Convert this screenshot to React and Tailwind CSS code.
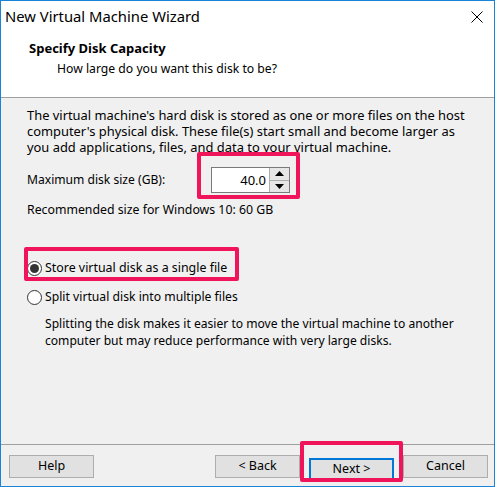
import React from "react";

const font = { fontFamily: '"Noto Sans", "Open Sans", sans-serif' };

function Radio({ checked }) {
  return (
    <span className="w-[15px] h-[15px] rounded-full border border-[#333333] bg-white flex items-center justify-center shrink-0">
      {checked && <span className="w-[9px] h-[9px] rounded-full bg-[#333333]" />}
    </span>
  );
}

function Spinner() {
  return (
    <div className="flex h-[26px] w-[79px] border border-[#7a7a7a] bg-white">
      <div className="flex-1 text-right pr-[3px] leading-[24px] text-[13px]">40.0</div>
      <div className="w-[20px] flex flex-col border-l border-[#adadad]">
        <div className="flex-1 bg-[#e6e6e6] border-b border-[#adadad] flex items-center justify-center">
          <svg width="9" height="5" viewBox="0 0 9 5"><path d="M4.5 0 L9 5 L0 5 Z" fill="#000" /></svg>
        </div>
        <div className="flex-1 bg-[#e6e6e6] flex items-center justify-center">
          <svg width="9" height="5" viewBox="0 0 9 5"><path d="M0 0 L9 0 L4.5 5 Z" fill="#000" /></svg>
        </div>
      </div>
    </div>
  );
}

function Btn({ children, focus }) {
  return (
    <button
      className={`w-[85px] h-[23px] bg-[#e1e1e1] text-[12.5px] text-black leading-none ${
        focus ? "border-2 border-[#0078d7]" : "border border-[#adadad]"
      }`}
    >
      {children}
    </button>
  );
}

export default function App() {
  return (
    <div className="w-[499px] h-[487px] bg-white text-black" style={font}>
      <div className="w-[495px] h-[487px] border border-[#1883d7] bg-[#f0f0f0] flex flex-col">
        {/* Header */}
        <div className="h-[97px] bg-white border-b border-[#a0a0a0] flex flex-col">
          <div className="h-[31px] flex items-center justify-between pl-[4px] pr-[11px]">
            <span className="text-[14.8px]">New Virtual Machine Wizard</span>
            <svg width="12" height="12" viewBox="0 0 12 12">
              <path d="M0.5 0.5 L11.5 11.5 M11.5 0.5 L0.5 11.5" stroke="#000" strokeWidth="1" />
            </svg>
          </div>
          <div className="pl-[28px] pt-[8px] text-[13px] leading-[16px] font-bold">Specify Disk Capacity</div>
          <div className="pl-[56px] pt-[5px] text-[12.2px] leading-[16px]">How large do you want this disk to be?</div>
        </div>

        {/* Body */}
        <div className="flex-1 pl-[26px] pt-[9px] text-[12.2px] leading-[16px]">
          <p className="text-[12.9px]">
            The virtual machine's hard disk is stored as one or more files on the host
            <br />
            computer's physical disk. These file(s) start small and become larger as
            <br />
            you add applications, files, and data to your virtual machine.
          </p>
          <div className="mt-[12px] flex items-center h-[26px]">
            <span className="w-[184px] text-[12.1px]">Maximum disk size (GB):</span>
            <div className="relative">
              <Spinner />
              <div className="absolute left-[-14px] top-[-15px] w-[103px] h-[47px] border-4 border-[#f0145a] rounded-[2px]" />
            </div>
          </div>
          <p className="mt-[9px] text-[12.3px]">Recommended size for Windows 10: 60 GB</p>

          <div className="mt-[42px] relative flex items-center gap-[3px] h-[16px]">
            <Radio checked />
            <span className="text-[12.4px]">Store virtual disk as a single file</span>
            <div className="absolute left-[-3px] top-[-13px] w-[215px] h-[34px] border-4 border-[#f0145a] rounded-[2px]" />
          </div>
          <div className="mt-[13px] flex items-center gap-[3px] h-[16px]">
            <Radio />
            <span>Split virtual disk into multiple files</span>
          </div>
          <p className="mt-[10px] pl-[18px] leading-[17px] text-[12.1px]">
            Splitting the disk makes it easier to move the virtual machine to another
            <br />
            computer but may reduce performance with very large disks.
          </p>
        </div>

        {/* Footer */}
        <div className="h-[42px] border-t border-[#a0a0a0] flex items-start pt-[10px] pl-[8px] pr-[6px]">
          <Btn>Help</Btn>
          <div className="flex-1" />
          <div className="flex gap-[9px]">
            <Btn>&lt; Back</Btn>
            <div className="relative">
              <Btn focus>Next &gt;</Btn>
              <div className="absolute left-[-9px] top-[-14px] w-[103px] h-[41px] border-4 border-[#f0145a] rounded-[2px]" />
            </div>
            <Btn>Cancel</Btn>
          </div>
        </div>
      </div>
    </div>
  );
}
